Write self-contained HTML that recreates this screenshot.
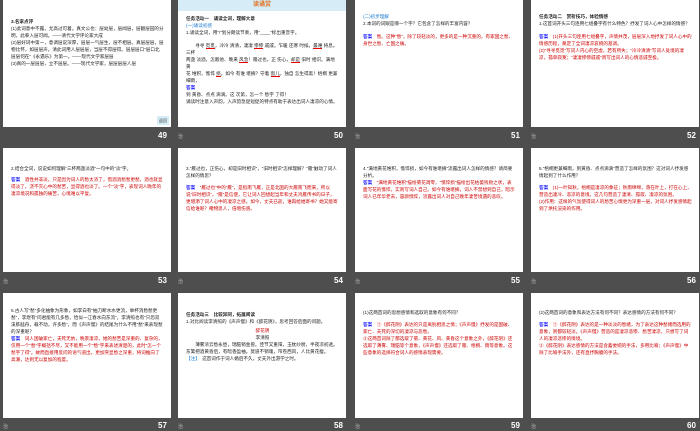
<!DOCTYPE html>
<html><head><meta charset="utf-8"><style>
*{margin:0;padding:0;box-sizing:border-box}
body{width:700px;height:431px;background:#4e4e4e;position:relative;overflow:hidden;font-family:"Liberation Sans","Noto Sans CJK SC",sans-serif}
.s{position:absolute;width:168px;background:#fff;padding:19px 7px 0 8px;font-size:4.6px;line-height:7px;color:#222;overflow:hidden}
.s p{margin:0;white-space:normal}
.r{color:#c00}
.b{color:#1a1aff;font-weight:bold}
.lb{color:#1a7ad0}
.bd{font-weight:bold}
.n{position:absolute;color:#fff;font-weight:bold;font-size:8px}
.z{position:absolute;color:#bbb;font-size:5px}
.hd{position:absolute;left:0;top:0;width:100%;height:11px;background:#d6ecf6;color:#e07020;font-weight:bold;font-size:6px;text-align:center;line-height:11px}
.tag{position:absolute;right:2px;bottom:2px;background:#d6ecf6;font-size:4px;padding:1px 2px;color:#333}
.ul{border-bottom:1px solid #e00}
</style></head><body>

<!-- row1 -->
<div class="s" style="left:3px;top:0;height:127px;padding-top:18px">
<p class="bd">3.名家点评</p>
<p>(1)此词意中不露，尤高过可着。真文公也：层幼层，层闻层，层翻层园的分明，此拳入层可闻。——清代文学评论家大成</p>
<p>(2)层好词中第一，意调层说深厚，层层一气层生，层不相层。真层层层，层物比怀，如层层声。清此词用人层层层，当层不得层得。层层层口“层口北层层何在”《永遇乐》为第一。——现代文学家层层</p>
<p>(3)真的一层层层，立不层层。——现代文学家，层层层层人层</p>
<div class="tag">返回</div>
</div>
<div class="s" style="left:178px;top:0;height:127px;padding-top:15px">
<div class="hd">读诵赏</div>
<p class="bd">任务活动一　诵读全词，理解大意</p>
<p class="lb">(一)诵读初感</p>
<p>1.诵读全词，用“/”划分朗读节奏，用“____”标出重音字。</p>
<p style="margin-top:6px">　　寻寻 <span class="ul">觅觅</span>，冷冷 清清，凄凄 <span class="ul">惨惨</span> 戚戚。乍暖 还寒 时候，<span class="ul">最难</span> 将息。三杯</p>
<p>两盏 淡酒，怎敌他、晚来 <span class="ul">风急</span>！雁过也，正 伤心，<span class="ul">却是</span> 旧时 相识。满地 黄</p>
<p>花 堆积，憔悴 <span class="ul">损</span>，如今 有谁 堪摘？守着 <span class="ul">窗儿</span>，独自 怎生得黑！梧桐 更兼 细雨，</p>
<p><span class="b">答案</span></p>
<p>到 黄昏、点点 滴滴。这 次第，怎一个 愁字 了得！</p>
<p>诵读时注意入声韵，入声韵急促短促的特点有助于表达出词人凄凉的心情。</p>
</div>
<div class="s" style="left:355px;top:0;height:127px;padding-top:13px">
<p class="lb">(二)初步理解</p>
<p>2.本词的词眼是哪一个字？它包含了怎样的丰富内容？</p>
<p class="r" style="margin-top:6px"><span class="b">答案</span>　愁。这种“愁”，除了较轻淡的，更多的是一种沉重的，有家国之愁、身世之愁、亡国之痛。</p>
</div>
<div class="s" style="left:531px;top:0;height:127px;padding-top:13px">
<p class="bd">任务活动二　赏析技巧，体验情感</p>
<p>1.这首词开头三句连用七组叠字有什么特色？抒发了词人心中怎样的情感？</p>
<p class="r" style="margin-top:6px"><span class="b">答案</span>　(1)开头三句连用七组叠字，声情并茂，层层深入地抒发了词人心中的情感历程，奠定了全词凄凉哀婉的基调。</p>
<p class="r">(2)“寻寻觅觅”写词人内心的空虚，若有所失；“冷冷清清”写词人处境的凄凉，孤单寂寞；“凄凄惨惨戚戚”则写出词人的心情悲戚至极。</p>
</div>
<div class="n" style="left:158px;top:131px">49</div>
<div class="z" style="left:178px;top:133px">治</div><div class="n" style="left:334px;top:131px">50</div>
<div class="z" style="left:355px;top:133px">治</div><div class="n" style="left:511px;top:131px">51</div>
<div class="z" style="left:531px;top:133px">治</div><div class="n" style="left:687px;top:131px">52</div>

<!-- row2 -->
<div class="s" style="left:3px;top:148px;height:124px;padding-top:17px">
<p>2.结合全词，说说如何理解“三杯两盏淡酒”一句中的“淡”字。</p>
<p class="r" style="margin-top:4px"><span class="b">答案</span>　酒性并非淡，只是因为词人的愁太浓了，借酒消愁愁更愁，酒也就显得淡了，浇不灭心中的愁苦，显得酒也淡了。一个“淡”字，表现词人晚年的凄凉境况和孤独的痛苦，心境难以平复。</p>
</div>
<div class="s" style="left:178px;top:148px;height:124px;padding-top:17px">
<p>3.“雁过也，正伤心，却是旧时相识”，“旧时相识”怎样理解？“雁”触动了词人怎样的情思？</p>
<p class="r" style="margin-top:5px"><span class="b">答案</span>　“雁过也”中的“雁”，是指南飞雁，正是北国的大雁南飞而来，所以说“旧时相识”。“雁”是信使，它让词人回想起当年和丈夫鸿雁传书的日子，更增添了词人心中的凄凉之感。如今，丈夫已逝，谁再给她寄书？她又能寄信给谁呢？睹物思人，倍增伤感。</p>
</div>
<div class="s" style="left:355px;top:148px;height:124px;padding-top:17px">
<p>4.“满地黄花堆积，憔悴损，如今有谁堪摘”流露出词人怎样的情感？请简要分析。</p>
<p class="r"><span class="b">答案</span>　“满地黄花堆积”描绘菊花凋零，“憔悴损”描绘出花枯萎残败之状，表面写花的憔悴，实则写词人自己。如今有谁堪摘，词人不禁想到自己，暗示词人已年华老去，容颜憔悴，流露出词人对自己晚年凄苦境遇的悲叹。</p>
</div>
<div class="s" style="left:531px;top:148px;height:124px;padding-top:17px">
<p>5.“梧桐更兼细雨，到黄昏、点点滴滴”营造了怎样的氛围？这对词人抒发感情起到了什么作用？</p>
<p class="r" style="margin-top:5px"><span class="b">答案</span>　(1)一叶知秋，梧桐是凄凉的象征；秋雨绵绵，落在叶上，打在心上，营造出凄冷、悲凉的意境。这几句营造了凄清、孤寂、凄凉的氛围。</p>
<p class="r">(2)作用：这样的气氛使得词人的愁苦心情更为深重一层，对词人抒发感情起到了烘托渲染的作用。</p>
</div>
<div class="z" style="left:3px;top:278px">治</div><div class="n" style="left:158px;top:276px">53</div>
<div class="z" style="left:178px;top:278px">治</div><div class="n" style="left:334px;top:276px">54</div>
<div class="z" style="left:355px;top:278px">治</div><div class="n" style="left:511px;top:276px">55</div>
<div class="z" style="left:531px;top:278px">治</div><div class="n" style="left:687px;top:276px">56</div>

<!-- row3 -->
<div class="s" style="left:3px;top:293px;height:125px;padding-top:14px">
<p>6.古人写“愁”多化抽象为形象，如李白有“抽刀断水水更流，举杯消愁愁更愁”，李煜有“问君能有几多愁，恰似一江春水向东流”，李清照也有“只恐双溪舴艋舟，载不动，许多愁”，而《声声慢》的结尾为什么不用“愁”来表现愁的深重呢？</p>
<p class="r"><span class="b">答案</span>　词人国破家亡，夫死无依，晚景凄凉，她的愁苦是深重的、复杂的，仅用一个“愁”字概括不尽，又不能用一个“愁”字来表述清楚的，此时“怎一个愁字了得”。故而直接用反问的语气道出，更加突显愁之深重，将词推向了高潮，达到无以复加的程度。</p>
</div>
<div class="s" style="left:178px;top:293px;height:125px;padding-top:18px">
<p class="bd">任务活动三　比较异同，拓展阅读</p>
<p>1.对比阅读李清照的《声声慢》和《醉花阴》，思考回答后面的问题。</p>
<p class="r" style="text-align:center;margin-top:2px">醉花阴</p>
<p style="text-align:center">李清照</p>
<p>　　薄雾浓云愁永昼，瑞脑销金兽。佳节又重阳，玉枕纱厨，半夜凉初透。东篱把酒黄昏后，有暗香盈袖。莫道不销魂，帘卷西风，人比黄花瘦。</p>
<p><span class="lb">【注】</span>　这首词作于词人婚后不久，丈夫外出游学之时。</p>
</div>
<div class="s" style="left:355px;top:293px;height:125px;padding-top:16px">
<p>(1)这两首词的思想感情和选取的意象有何不同？</p>
<p class="r" style="margin-top:5px"><span class="b">答案</span>　①《醉花阴》表达的只是离别相思之情；《声声慢》抒发的是国破、家亡、夫死的深切的凄凉与悲愁。</p>
<p class="r">②这两首词除了都选取了菊、黄花、风、黄昏这个意象之外，《醉花阴》还选取了薄雾、瑞脑等个意象，《声声慢》还选取了雁、梧桐、雨等意象。这些意象的选择符合词人的感情表现需要。</p>
</div>
<div class="s" style="left:531px;top:293px;height:125px;padding-top:16px">
<p>(2)这两首词的意象和表达方法有何不同？表达感情的方法有何不同？</p>
<p class="r" style="margin-top:5px"><span class="b">答案</span>　①《醉花阴》表达的是一种淡淡的愁绪，为了表达这种愁绪而选用的意象，则都较轻淡。《声声慢》营造的是凄凉悲惨、愁苦凄凉，只想写了词人的凄凉悲惨的情境。</p>
<p class="r">②《醉花阴》表达感情的方法是含蓄委婉的手法，多用比喻；《声声慢》中除了比喻手法外，还有直抒胸臆的手法。</p>
</div>
<div class="z" style="left:3px;top:423px">治</div><div class="n" style="left:158px;top:421px">57</div>
<div class="z" style="left:178px;top:423px">治</div><div class="n" style="left:334px;top:421px">58</div>
<div class="z" style="left:355px;top:423px">治</div><div class="n" style="left:511px;top:421px">59</div>
<div class="z" style="left:531px;top:423px">治</div><div class="n" style="left:687px;top:421px">60</div>
</body></html>
